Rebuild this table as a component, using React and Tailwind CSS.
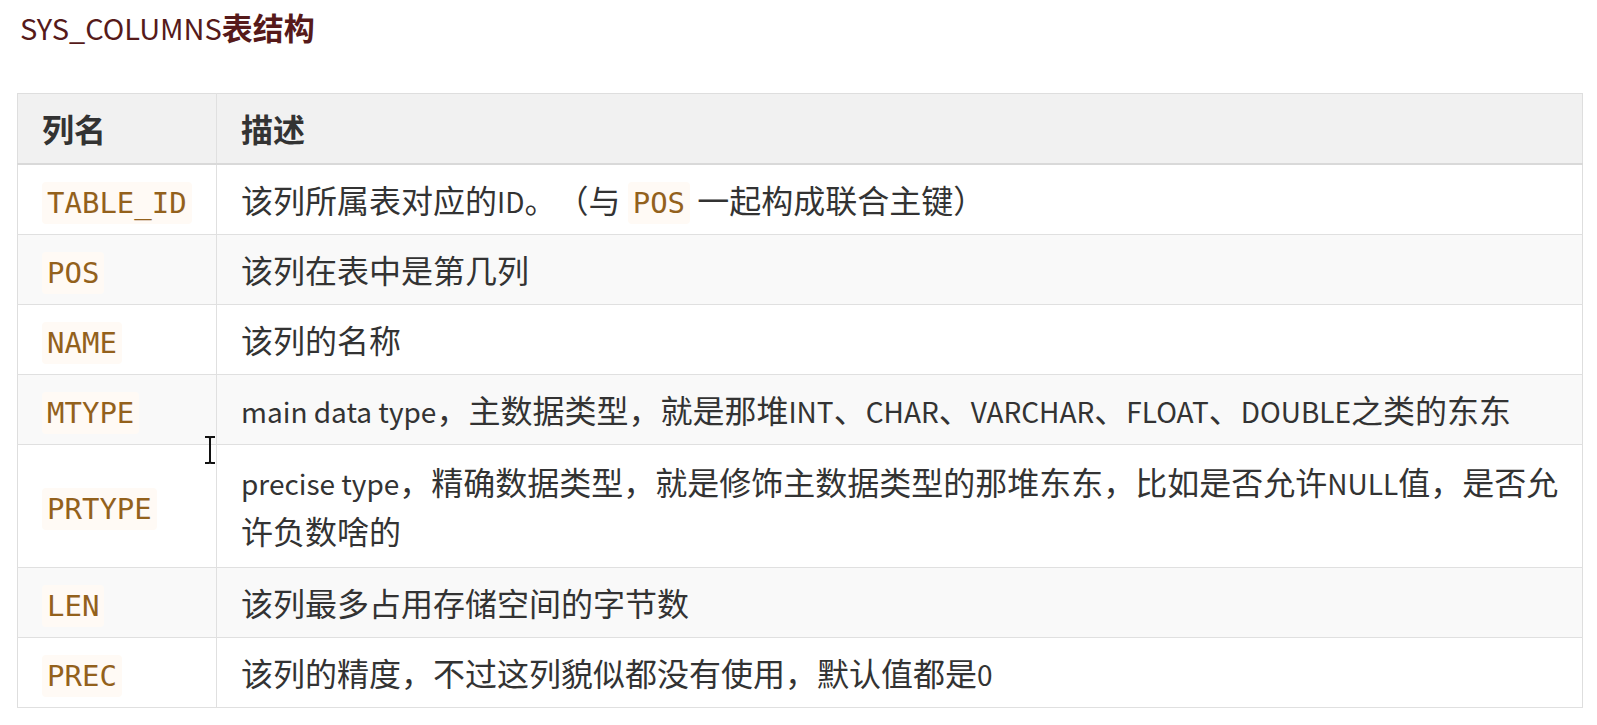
function Txt({ s }) {
  // latin runs are set a bit smaller, as the reference's latin glyphs are narrower than the CJK ones
  return s.split(/([A-Za-z0-9 ._]+)/).map((p, i) =>
    /[A-Za-z0-9]/.test(p) ? (
      <span key={i} className="text-[28px] leading-none">{p}</span>
    ) : (
      p
    )
  );
}

function Code({ children }) {
  return (
    <code className="font-['DejaVu_Sans_Mono',monospace] text-[29px] leading-none text-[#93611c] bg-[#fffaf5] rounded px-[5px] py-[4px]">
      {children}
    </code>
  );
}

const rows = [
  { name: "TABLE_ID", desc: (
    <>
      <Txt s="该列所属表对应的ID。（与 " />
      <Code>POS</Code>
      <Txt s=" 一起构成联合主键）" />
    </>
  ) },
  { name: "POS", desc: <Txt s="该列在表中是第几列" /> },
  { name: "NAME", desc: <Txt s="该列的名称" /> },
  { name: "MTYPE", desc: <Txt s="main data type，主数据类型，就是那堆INT、CHAR、VARCHAR、FLOAT、DOUBLE之类的东东" /> },
  { name: "PRTYPE", tall: true, desc: (
    <>
      <span className="whitespace-nowrap">
        <Txt s="precise type，精确数据类型，就是修饰主数据类型的那堆东东，比如是否允许NULL值，是否允" />
      </span>
      <br />
      <Txt s="许负数啥的" />
    </>
  ) },
  { name: "LEN", desc: <Txt s="该列最多占用存储空间的字节数" /> },
  { name: "PREC", desc: <Txt s="该列的精度，不过这列貌似都没有使用，默认值都是0" /> },
];

function IBeam() {
  return (
    <svg className="absolute left-[204px] top-[436px]" width="12" height="28" viewBox="0 0 12 28">
      <path d="M1 1h4l1 1 1-1h4M6 2v24M1 27h4l1-1 1 1h4" fill="none" stroke="#111" strokeWidth="2" />
    </svg>
  );
}

export default function App() {
  return (
    <div className="relative min-h-screen bg-white font-['Noto_Sans_CJK_SC','Noto_Sans',sans-serif] text-[#333] [text-spacing-trim:space-all]">
      <div className="pl-[20px] pt-[5px] text-[31px] leading-[44px] text-[#561a1a]">
        <span className="font-normal text-[29px]">SYS_COLUMNS</span>
        <span className="font-bold">表结构</span>
      </div>
      <div className="pl-[17px] pt-[44px]">
        <table className="w-[1566px] table-fixed border-collapse border border-[#dedede] text-[32px] leading-[49px]">
          <colgroup>
            <col className="w-[199px]" />
            <col />
          </colgroup>
          <thead>
            <tr className="bg-[#f1f1f1] border-b-2 border-[#d9d9d9]">
              <th className="h-[70px] px-[24px] text-left font-bold border-r border-[#e0e0e0]">列名</th>
              <th className="h-[70px] px-[24px] text-left font-bold">描述</th>
            </tr>
          </thead>
          <tbody>
            {rows.map((r, i) => (
              <tr key={r.name} className={(i % 2 === 1 ? "bg-[#f9f9f9]" : "bg-white") + " border-b border-[#e0e0e0]"}>
                <td className={(r.tall ? "py-[12px]" : "py-[10px]") + " px-[24px] border-r border-[#e0e0e0] align-middle"}>
                  <Code>{r.name}</Code>
                </td>
                <td className={(r.tall ? "py-[12px]" : "py-[10px]") + " px-[24px] align-middle"}>{r.desc}</td>
              </tr>
            ))}
          </tbody>
        </table>
      </div>
      <IBeam />
    </div>
  );
}
